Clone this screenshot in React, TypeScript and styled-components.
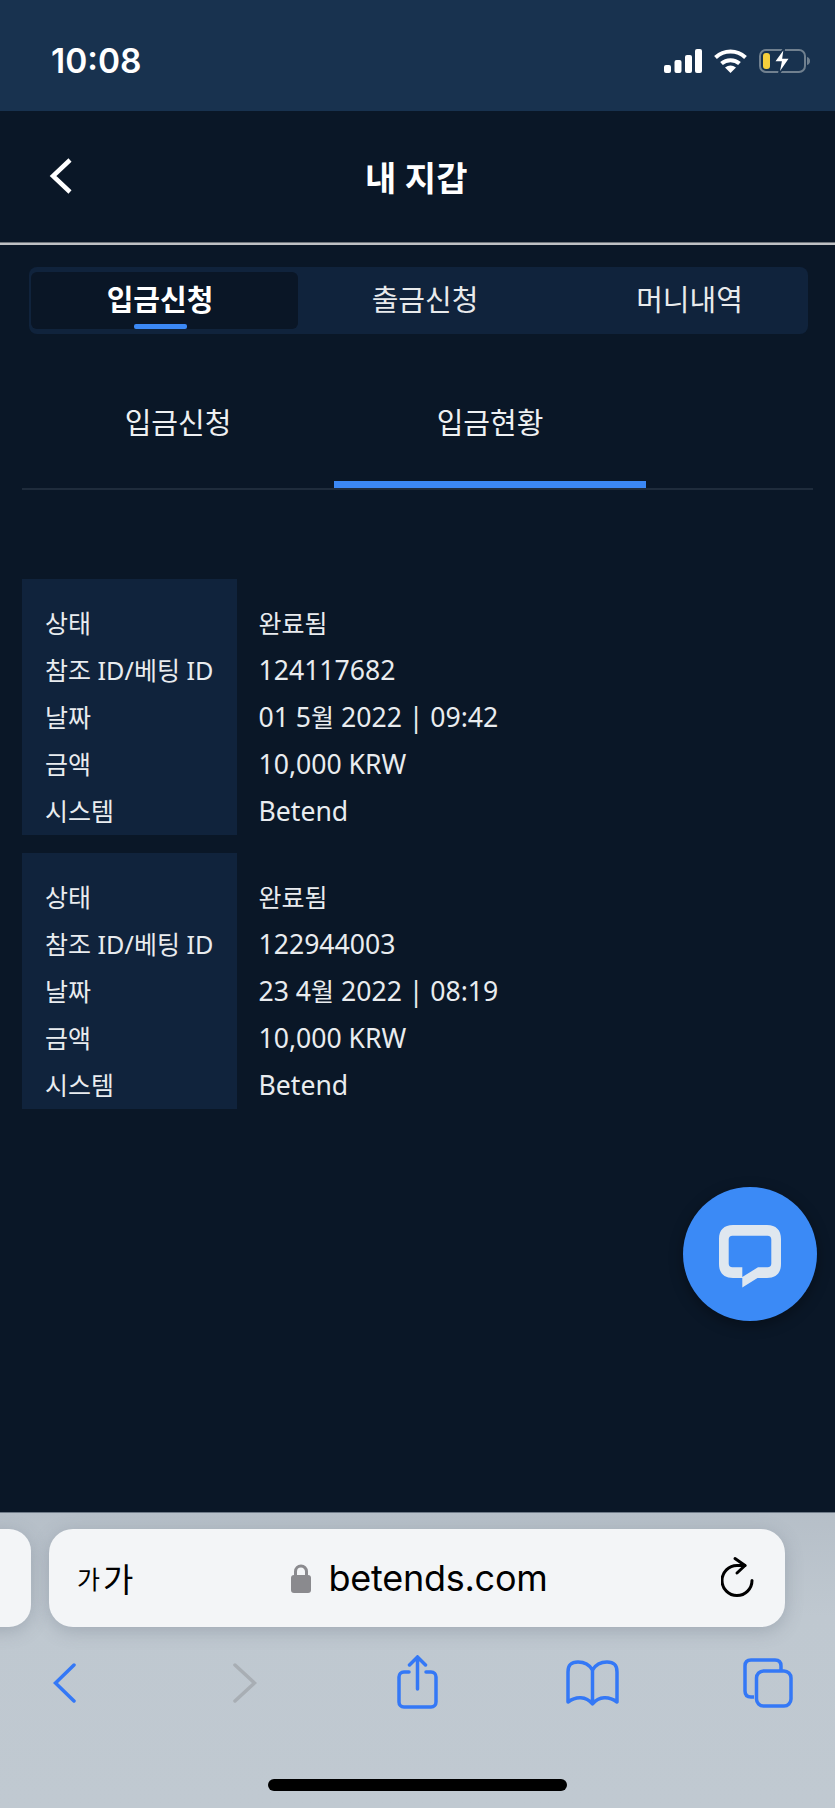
import React from "react";
import styled, { createGlobalStyle } from "styled-components";

const Global = createGlobalStyle`
  html, body { margin: 0; padding: 0; background: #0a1727; }
  body { font-family: "Noto Sans CJK KR", "Noto Sans", sans-serif; }
`;
const Phone = styled.div`
  width: 835px; height: 1808px; display: flex; flex-direction: column; overflow: hidden; position: relative;
  background: #0a1727; color: #fff;
`;
const StatusBar = styled.div`
  height: 111px; background: #18324f; flex: none; display: flex; justify-content: space-between; align-items: flex-start;
  padding: 39px 25px 0 51px; box-sizing: border-box;
`;
const Clock = styled.div`
  font: 600 33.500px/44px "Inter", sans-serif;
`;
const StatusIcons = styled.div`
  display: flex; align-items: center; gap: 12px; padding-top: 8px;
`;
const Header = styled.div`
  height: 134px; flex: none; display: flex; align-items: center; justify-content: center; position: relative;
  border-bottom: 2px solid #bfc1c4; box-shadow: inset 0 -1px 0 #6f757c; box-sizing: border-box;
`;
const BackIcon = styled.svg`
  position: absolute; left: 49px; top: 47px;
`;
const Title = styled.div`
  font-size: 34px; font-weight: 700; line-height: 44px; margin-right: 2px; letter-spacing: .3px;
`;
const TopTabs = styled.div`
  margin: 22px 27px 0 29px; height: 67px; background: #10233c; border-radius: 8px; display: grid;
  grid-template-columns: 267px 254px 1fr; padding: 5px 2px 5px 2px; box-sizing: border-box;
`;
const TopTab = styled.div<{ $active?: boolean; $inset?: number }>`
  position: relative; display: flex; align-items: center; justify-content: center; border-radius: 6px;
  font-size: 29px; font-weight: ${(p) => (p.$active ? 700 : 400)}; color: ${(p) => (p.$active ? "#fff" : "#e8eaec")};
  background: ${(p) => (p.$active ? "#0a1626" : "transparent")};
  padding: 0 ${(p) => (p.$active ? 9 : 0)}px 6px ${(p) => p.$inset ?? 0}px;
  ${(p) => p.$active && `&::after { content: ""; position: absolute; left: 103px; bottom: 0; width: 53px; height: 5px; border-radius: 2px; background: #3b88f5; }`}
`;
const SubTabs = styled.div`
  margin: 0 22px; height: 156px; display: flex; border-bottom: 2px solid #1f2c3c; box-sizing: border-box;
`;
const SubTab = styled.div<{ $active?: boolean }>`
  width: 312px; flex: none; display: flex; justify-content: center; align-items: flex-start; padding-top: 66px; box-sizing: border-box;
  font-size: 29px; line-height: 42px; color: #eef0f2;
  border-bottom: ${(p) => (p.$active ? "7px solid #3b88f5" : "none")};
`;
const Records = styled.div`
  margin: 89px 0 0 22px; display: flex; flex-direction: column; gap: 18px;
`;
const Record = styled.div`
  display: grid; grid-template-columns: 215px 1fr; height: 256px;
`;
const Labels = styled.div`
  background: #10233c; padding: 21px 0 0 23px; box-sizing: border-box;
`;
const Values = styled.div`
  padding: 21px 0 0 21.500px; box-sizing: border-box;
`;
const Line = styled.div`
  font-family: "Noto Sans", "Noto Sans CJK KR", sans-serif;
  font-size: 26.600px; height: 47px; line-height: 47px; color: #e9ecef; white-space: nowrap;
`;
const LabelLine = styled(Line)`
  font-size: 25.200px;
`;
const Ko = styled.span`
  font-size: 25px;
`;
const ChatButton = styled.div`
  position: absolute; left: 683px; top: 1187px; width: 134px; height: 134px; border-radius: 50%;
  background: #3b8af6; display: flex; align-items: center; justify-content: center;
  box-shadow: 0 4px 14px rgba(0,0,0,.35);
  svg { margin-top: 4px; }
`;
const Spacer = styled.div`flex: 1;`;
const Browser = styled.div`
  height: 296px; flex: none; background: linear-gradient(#b6bfc8, #bfc8d0 35%, #c0c9d1); border-top: 1px solid #6f7b88; box-sizing: border-box;
  position: relative; padding-top: 16px;
`;
const UrlRow = styled.div`
  display: flex; gap: 18px; margin-left: -300px;
`;
const PrevCard = styled.div`
  width: 331px; height: 98px; flex: none; border-radius: 22px; background: #f3f5f7;
  box-shadow: 0 4px 18px rgba(90,100,115,.3);
`;
const UrlBar = styled.div`
  width: 736px; height: 98px; flex: none; border-radius: 24px; background: #f3f5f7; position: relative;
  display: flex; align-items: center; justify-content: center; box-shadow: 0 4px 18px rgba(90,100,115,.3);
  color: #000; padding-left: 5px; box-sizing: border-box;
`;
const AaLabel = styled.div`
  position: absolute; left: 28px; top: 28px; font-size: 33px; font-weight: 400; line-height: 42px; display: flex; align-items: center; gap: 3px;
  span:first-child { font-size: 25px; }
`;
const Domain = styled.div`
  font: 400 36px/48px "Inter", "Liberation Sans", sans-serif; margin-left: 17px; letter-spacing: -.25px;
`;
const Reload = styled.svg`
  position: absolute; right: 31px; top: 27px;
`;
const ToolRow = styled.div`
  display: flex; align-items: center; height: 112px; padding-left: 53px;
`;
const ToolIcon = styled.svg<{ $gap?: number }>`
  flex: none; margin-left: ${(p) => p.$gap ?? 0}px;
`;
const HomeBar = styled.div`
  position: absolute; left: 268px; bottom: 17px; width: 299px; height: 12px; border-radius: 6px; background: #000;
`;

const records = [
  { id: "124117682", day: "01 5", month: "월", rest: " 2022 | 09:42" },
  { id: "122944003", day: "23 4", month: "월", rest: " 2022 | 08:19" },
];

export default function App() {
  return (
    <Phone>
      <Global />
      <StatusBar>
        <Clock>10:08</Clock>
        <StatusIcons>
          <svg width="38" height="24" viewBox="0 0 38 24" fill="#fff">
            <rect x="0" y="16" width="7" height="8" rx="2" />
            <rect x="10.500" y="11" width="7" height="13" rx="2" />
            <rect x="21" y="6" width="7" height="18" rx="2" />
            <rect x="31" y="0" width="7" height="24" rx="2" />
          </svg>
          <svg width="33" height="24" viewBox="0 0 33 24" fill="none" stroke="#fff" strokeWidth="4">
            <path d="M1.500 8.500C10 .5 23 .5 31.500 8.500" />
            <path d="M7.500 14.500C12.500 10 20.500 10 25.500 14.500" />
            <path d="M16.500 24L11 18.500Q16.500 14.500 22 18.500z" fill="#fff" stroke="none" />
          </svg>
          <svg width="51" height="28" viewBox="0 0 51 28" fill="none">
            <rect x="1" y="3" width="45" height="22" rx="6" stroke="#70808f" strokeWidth="2" />
            <path d="M48 10c2 .6 3 2 3 4s-1 3.400-3 4z" fill="#70808f" />
            <rect x="4" y="6" width="7" height="16" rx="3" fill="#f6cf3c" />
            <path d="M25.500 .5L15 15h7l-2.400 12.500L31 11h-7z" fill="#fff" stroke="#18324f" strokeWidth="1.500" />
          </svg>
        </StatusIcons>
      </StatusBar>
      <Header>
        <BackIcon width="24" height="36" viewBox="0 0 24 36" fill="none" stroke="#fff" strokeWidth="4.500">
          <path d="M21 2L4 18l17 16" />
        </BackIcon>
        <Title>내 지갑</Title>
      </Header>
      <TopTabs>
        <TopTab $active>입금신청</TopTab>
        <TopTab>출금신청</TopTab>
        <TopTab $inset={21}>머니내역</TopTab>
      </TopTabs>
      <SubTabs>
        <SubTab>입금신청</SubTab>
        <SubTab $active>입금현황</SubTab>
      </SubTabs>
      <Records>
        {records.map((r) => (
          <Record key={r.id}>
            <Labels>
              <LabelLine><Ko>상태</Ko></LabelLine>
              <LabelLine><Ko>참조</Ko> ID/<Ko>베팅</Ko> ID</LabelLine>
              <LabelLine><Ko>날짜</Ko></LabelLine>
              <LabelLine><Ko>금액</Ko></LabelLine>
              <LabelLine><Ko>시스템</Ko></LabelLine>
            </Labels>
            <Values>
              <Line><Ko>완료됨</Ko></Line>
              <Line>{r.id}</Line>
              <Line>{r.day}<Ko>{r.month}</Ko>{r.rest}</Line>
              <Line>10,000 KRW</Line>
              <Line>Betend</Line>
            </Values>
          </Record>
        ))}
      </Records>
      <ChatButton>
        <svg width="62" height="63" viewBox="0 0 62 63">
          <path fillRule="evenodd" fill="#dfe7ef" d="M14 0H48C57 0 62 5 62 14V39C62 48 57 53 48 53H38.500L23.300 62.500V53H14C5 53 0 48 0 39V14C0 5 5 0 14 0ZM13.500 10.700H48.500C51 10.700 52.300 12 52.300 14.500V38.500C52.300 41 51 42.300 48.500 42.300H39L23.300 52V42.300H13.500C11 42.300 9.700 41 9.700 38.500V14.500C9.700 12 11 10.700 13.500 10.700Z" />
        </svg>
      </ChatButton>
      <Spacer />
      <Browser>
        <UrlRow>
          <PrevCard />
          <UrlBar>
            <AaLabel><span>가</span><span>가</span></AaLabel>
            <svg width="20" height="29" viewBox="0 0 20 29">
              <path d="M4.500 12V7.500a5.500 5.500 0 0 1 11 0V12" fill="none" stroke="#8a8a8e" strokeWidth="3" />
              <rect x="0" y="11" width="20" height="18" rx="3" fill="#8a8a8e" />
            </svg>
            <Domain>betends.com</Domain>
            <Reload width="33" height="42" viewBox="0 0 33 42" fill="none" stroke="#000" strokeWidth="3" strokeLinecap="round" strokeLinejoin="round">
              <path d="M24 9.500H16A15 15 0 1 0 31 24.500" />
              <path d="M14 2.500L24 9.500 16 17" />
            </Reload>
          </UrlBar>
        </UrlRow>
        <ToolRow>
          <ToolIcon width="23" height="40" viewBox="0 0 23 40" fill="none" stroke="#3478f6" strokeWidth="3.500" strokeLinecap="round">
            <path d="M21 2L2.500 20 21 38" />
          </ToolIcon>
          <ToolIcon $gap={157} width="24" height="40" viewBox="0 0 24 40" fill="none" stroke="#a8aeb4" strokeWidth="3.500" strokeLinecap="round">
            <path d="M2 2l19.500 18L2 38" />
          </ToolIcon>
          <ToolIcon $gap={140} width="41" height="56" viewBox="0 0 41 56" fill="none" stroke="#3478f6" strokeWidth="3.500" strokeLinecap="round">
            <path d="M20.500 34V2M12.500 10l8-8 8 8" />
            <path d="M12 17H7c-3 0-5 2-5 5v25c0 3 2 5 5 5h27c3 0 5-2 5-5V22c0-3-2-5-5-5h-5" />
          </ToolIcon>
          <ToolIcon $gap={128} width="53" height="46" viewBox="0 0 53 46" fill="none" stroke="#3478f6" strokeWidth="3.500" strokeLinejoin="round">
            <path d="M26.500 10C23 4 17 2 12 2 5 2 2 5 2 12v30c8-6 18-6 24.500 2C33 36 43 36 51 42V12c0-7-3-10-10-10-5 0-11 2-14.500 8zM26.500 10v34" />
          </ToolIcon>
          <ToolIcon $gap={124} width="50" height="50" viewBox="0 0 50 50" fill="none" stroke="#3478f6" strokeWidth="3.500">
            <path d="M11 39H8c-4 0-6-2-6-6V8c0-4 2-6 6-6h24c4 0 6 2 6 6v4" />
            <rect x="13.500" y="13" width="34.500" height="35" rx="7" />
          </ToolIcon>
        </ToolRow>
        <HomeBar />
      </Browser>
    </Phone>
  );
}
